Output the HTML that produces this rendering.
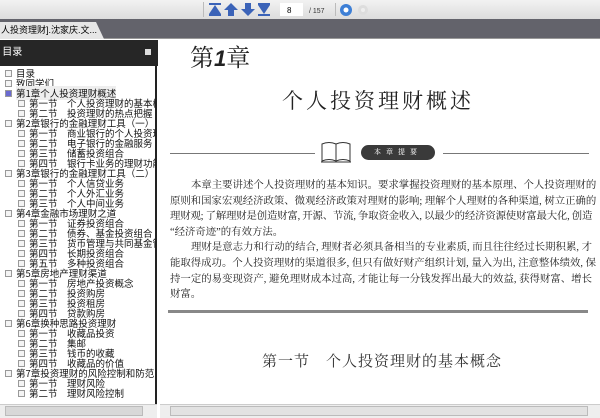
<!DOCTYPE html>
<html><head><meta charset="utf-8"><style>
*{margin:0;padding:0;box-sizing:border-box}
body{width:600px;height:418px;overflow:hidden;position:relative;background:#fff;font-family:"Liberation Serif","Noto Serif CJK SC",serif}
.abs{position:absolute}
.tb{left:0;top:0;width:600px;height:19px;background:linear-gradient(#f2f2f2,#dcdcdc)}
.bar{left:0;top:19px;width:600px;height:20px;background:#63636b;border-bottom:1px solid #999}
.tab{left:0;top:22px;width:104px;height:17px;background:#e6e6e6;font:9px "Liberation Sans","Noto Sans CJK SC",sans-serif;line-height:17px;white-space:nowrap;overflow:hidden;padding-left:1px;clip-path:polygon(0 0,96px 0,104px 17px,0 17px)}
.sh{left:0;top:40px;width:158px;height:26px;background:#262626;color:#fff;font:10px "Noto Sans CJK SC",sans-serif;line-height:22px}
.tree{left:0;top:66px;width:157px;height:338px;background:#fff;border-right:2px solid #222;overflow:hidden;font:9.5px "Noto Sans CJK SC",sans-serif;color:#111}
.it{position:absolute;white-space:nowrap;height:10px;line-height:10px}
.cb{display:inline-block;width:7px;height:7px;border:1px solid #999;background:#f4f4f4;vertical-align:middle;margin-right:4px;margin-top:-2px}
.sb{height:14px;background:#eee;border-top:1px solid #ccc}
.txt{font-family:"Liberation Serif","Noto Serif CJK SC",serif;font-size:10.4px;line-height:15.6px;color:#222}
.txt div{white-space:nowrap;text-align:justify;text-align-last:justify;height:15.6px}
.txt div.e{text-align-last:left}
.txt div.i{padding-left:21px}
</style></head><body>
<div class="abs tb"></div>
<div class="abs" style="left:203px;top:2px;width:1px;height:15px;background:#bbb"></div>
<svg class="abs" style="left:208px;top:2px" width="160" height="15">
<g fill="#3b63b8"><rect x="1" y="1" width="12" height="2"/><path d="M7 3 L13 12 L1 12Z"/><rect x="1" y="12" width="12" height="2"/>
<path d="M23 1 L30 8 L26 8 L26 14 L20 14 L20 8 L16 8Z"/>
<path d="M40 14 L47 7 L43 7 L43 1 L37 1 L37 7 L33 7Z"/>
<rect x="50" y="1" width="12" height="2"/><path d="M56 12 L62 3 L50 3Z"/><rect x="50" y="12" width="12" height="2"/></g>
<rect x="72" y="1" width="23" height="13" fill="#fff"/><text x="79" y="11" font-size="8" font-family="Liberation Sans">8</text>
<text x="101" y="11" font-size="7" font-family="Liberation Sans" fill="#333">/ 157</text>
<rect x="127" y="1" width="1" height="13" fill="#bbb"/>
<circle cx="138" cy="8" r="6" fill="#3d7fd6"/><circle cx="138" cy="8" r="2.5" fill="#fff"/>
<circle cx="155" cy="8" r="5" fill="#ddd"/><circle cx="155" cy="8" r="2" fill="#eee"/>
</svg>
<div class="abs bar"></div>
<div class="abs tab">人投资理财].沈家庆.文... &nbsp;<b>✕</b></div>
<div class="abs sh">&nbsp;目录<span style="position:absolute;right:7px;top:9px;width:6px;height:6px;background:#ddd"></span></div>
<div class="abs tree">
<div class="it" style="top:2px;left:5px"><span class="cb"></span>目录</div>
<div class="it" style="top:12px;left:5px"><span class="cb"></span>致同学们</div>
<div class="it" style="top:22px;left:5px"><span class="cb" style="background:#6a6ad0"></span><span style="background:#eee">第1章个人投资理财概述</span></div>
<div class="it" style="top:32px;left:18px"><span class="cb"></span>第一节　个人投资理财的基本概念</div>
<div class="it" style="top:42px;left:18px"><span class="cb"></span>第二节　投资理财的热点把握</div>
<div class="it" style="top:52px;left:5px"><span class="cb"></span>第2章银行的金融理财工具（一）</div>
<div class="it" style="top:62px;left:18px"><span class="cb"></span>第一节　商业银行的个人投资理财</div>
<div class="it" style="top:72px;left:18px"><span class="cb"></span>第二节　电子银行的金融服务</div>
<div class="it" style="top:82px;left:18px"><span class="cb"></span>第三节　储蓄投资组合</div>
<div class="it" style="top:92px;left:18px"><span class="cb"></span>第四节　银行卡业务的理财功能</div>
<div class="it" style="top:102px;left:5px"><span class="cb"></span>第3章银行的金融理财工具（二）</div>
<div class="it" style="top:112px;left:18px"><span class="cb"></span>第一节　个人信贷业务</div>
<div class="it" style="top:122px;left:18px"><span class="cb"></span>第二节　个人外汇业务</div>
<div class="it" style="top:132px;left:18px"><span class="cb"></span>第三节　个人中间业务</div>
<div class="it" style="top:142px;left:5px"><span class="cb"></span>第4章金融市场理财之道</div>
<div class="it" style="top:152px;left:18px"><span class="cb"></span>第一节　证券投资组合</div>
<div class="it" style="top:162px;left:18px"><span class="cb"></span>第二节　债券、基金投资组合</div>
<div class="it" style="top:172px;left:18px"><span class="cb"></span>第三节　货币管理与共同基金管理</div>
<div class="it" style="top:182px;left:18px"><span class="cb"></span>第四节　长期投资组合</div>
<div class="it" style="top:192px;left:18px"><span class="cb"></span>第五节　多种投资组合</div>
<div class="it" style="top:202px;left:5px"><span class="cb"></span>第5章房地产理财渠道</div>
<div class="it" style="top:212px;left:18px"><span class="cb"></span>第一节　房地产投资概念</div>
<div class="it" style="top:222px;left:18px"><span class="cb"></span>第二节　投资购房</div>
<div class="it" style="top:232px;left:18px"><span class="cb"></span>第三节　投资租房</div>
<div class="it" style="top:242px;left:18px"><span class="cb"></span>第四节　贷款购房</div>
<div class="it" style="top:252px;left:5px"><span class="cb"></span>第6章换种思路投资理财</div>
<div class="it" style="top:262px;left:18px"><span class="cb"></span>第一节　收藏品投资</div>
<div class="it" style="top:272px;left:18px"><span class="cb"></span>第二节　集邮</div>
<div class="it" style="top:282px;left:18px"><span class="cb"></span>第三节　钱币的收藏</div>
<div class="it" style="top:292px;left:18px"><span class="cb"></span>第四节　收藏品的价值</div>
<div class="it" style="top:302px;left:5px"><span class="cb"></span>第7章投资理财的风险控制和防范</div>
<div class="it" style="top:312px;left:18px"><span class="cb"></span>第一节　理财风险</div>
<div class="it" style="top:322px;left:18px"><span class="cb"></span>第二节　理财风险控制</div>
</div>
<div class="abs sb" style="left:0;top:404px;width:157px"></div>
<div class="abs" style="left:5px;top:406px;width:138px;height:10px;background:#d8d8d8;border:1px solid #bbb"></div>
<div class="abs sb" style="left:160px;top:404px;width:440px"></div>
<div class="abs" style="left:170px;top:406px;width:418px;height:10px;background:#e2e2e2;border:1px solid #bbb"></div>

<div class="abs" style="left:190px;top:44px;font-size:24px;line-height:30px;color:#222">第<i style="font-family:'Liberation Sans';font-weight:bold;font-size:22px">1</i>章</div>
<div class="abs" style="left:282px;top:85px;font-size:21px;letter-spacing:3px;color:#222">个人投资理财概述</div>
<div class="abs" style="left:170px;top:153px;width:145px;height:1px;background:#777"></div>
<div class="abs" style="left:443px;top:153px;width:146px;height:1px;background:#777"></div>
<svg class="abs" style="left:320px;top:141px" width="36" height="24"><path d="M2 3 Q9 0 16 3 L16 20 Q9 17 2 20Z M16 3 Q23 0 30 3 L30 20 Q23 17 16 20Z" fill="none" stroke="#333"/><path d="M1 21 L31 21" stroke="#333"/></svg>
<div class="abs" style="left:361px;top:145px;width:74px;height:15px;border-radius:8px;background:#3a3a3a;color:#fff;font-size:7px;line-height:15px;text-align:center;letter-spacing:5px">本章提要</div>
<div class="abs txt" style="left:170px;top:178px;width:422px">
<div class="i">本章主要讲述个人投资理财的基本知识。要求掌握投资理财的基本原理、个人投资理财的</div>
<div>原则和国家宏观经济政策、微观经济政策对理财的影响; 理解个人理财的各种渠道, 树立正确的</div>
<div style="letter-spacing:-0.4px">理财观; 了解理财是创造财富, 开源、节流, 争取资金收入, 以最少的经济资源使财富最大化, 创造</div>
<div class="e">“经济奇迹”的有效方法。</div>
<div class="i">理财是意志力和行动的结合, 理财者必须具备相当的专业素质, 而且往往经过长期积累, 才</div>
<div>能取得成功。个人投资理财的渠道很多, 但只有做好财产组织计划, 量入为出, 注意整体绩效, 保</div>
<div>持一定的易变现资产, 避免理财成本过高, 才能让每一分钱发挥出最大的效益, 获得财富、增长</div>
<div class="e">财富。</div>
</div>
<div class="abs" style="left:168px;top:310px;width:420px;height:3px;background:#888"></div>
<div class="abs" style="left:262px;top:350px;font-size:15px;letter-spacing:1px;color:#333">第一节　个人投资理财的基本概念</div>
</body></html>
